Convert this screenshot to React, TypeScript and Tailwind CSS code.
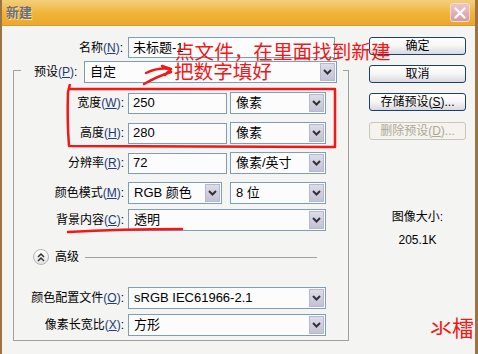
import React from "react";

const font = "font-['Liberation_Sans','Noto_Sans_CJK_SC',sans-serif]";

function Chevron() {
     return (
          <svg width="9" height="6" viewBox="0 0 9 6">
               <polyline points="1,1 4.5,4.5 8,1" fill="none" stroke="#333" strokeWidth="2" />
          </svg>
     );
}

function Label({ text, mn, w }: { text: string; mn: string; w: string }) {
     return (
          <div className={`${w} shrink-0 text-right text-[12px] text-black leading-none`}>
               {text}
               <span className="text-[#1c3a78]">
                    (<span className="underline">{mn}</span>)
               </span>
               :
          </div>
     );
}

function Input({ value, w }: { value: string; w: string }) {
     return (
          <div className={`${w} h-[21px] border border-[#7f9db9] bg-[#fcfcfc] pl-[4px] flex items-center text-[13px] text-black`}>
               {value}
          </div>
     );
}

function Select({ value, w }: { value: string; w: string }) {
     return (
          <div className={`${w} h-[22px] border border-[#7f9db9] bg-[#fcfcfc] flex items-center text-[13px] text-black`}>
               <span className="pl-[5px] flex-1 whitespace-nowrap overflow-hidden">{value}</span>
               <div className="w-[15px] h-[18px] mr-[1px] bg-gradient-to-b from-[#dcdcea] to-[#c2c2d6] border border-[#b8b8cc] flex items-center justify-center">
                    <Chevron />
               </div>
          </div>
     );
}

function Button({ children, disabled }: { children: React.ReactNode; disabled?: boolean }) {
     return (
          <div
               className={`w-[97px] h-[18px] rounded-[3px] border flex items-center justify-center text-[12px] ${
                    disabled
                         ? "border-[#c9c7ba] text-[#aca899] bg-[#f4f3ee]"
                         : "border-[#1c3f6e] text-black bg-gradient-to-b from-white via-[#f6f6f4] to-[#d8d8e2]"
               }`}
          >
               {children}
          </div>
     );
}

export default function App() {
     return (
          <div className={`relative w-[478px] h-[354px] overflow-hidden bg-[#f4f4f2] border-l-2 border-r-[3px] border-[#9a7442] ${font}`}>
               {/* Title bar */}
               <div className="h-[26px] bg-gradient-to-b from-[#f3cf7c] via-[#f1b53a] to-[#eaa82c] flex items-center justify-between px-[4px] border-b border-[#d89a2a]">
                    <span className="text-[13px] font-bold text-[#6e6e6e] [text-shadow:1px_1px_0_#f6e0b0]">新建</span>
                    <div className="w-[20px] h-[19px] rounded-[3px] bg-gradient-to-b from-[#f0c4c8] to-[#d89aa2] border border-[#f6dede] flex items-center justify-center mr-[1px]">
                         <svg width="12" height="12" viewBox="0 0 12 12">
                              <path d="M1.5 1.5 L10.5 10.5 M10.5 1.5 L1.5 10.5" stroke="white" strokeWidth="2.4" strokeLinecap="round" />
                         </svg>
                    </div>
               </div>

               {/* Body */}
               <div className="flex">
                    {/* Left */}
                    <div className="w-[355px] pt-[11px]">
                         <div className="flex items-center">
                              <Label text="名称" mn="N" w="w-[121px]" />
                              <div className="ml-[5px]">
                                   <Input value="未标题-1" w="w-[207px]" />
                              </div>
                         </div>

                         <div className="ml-[11px] mt-[12px] w-[336px] h-[271px] border border-[#a0a0a0]">
                              <div className="-mt-[10px] ml-[7px] w-[322px] h-[21px] bg-[#f4f4f2] flex items-center pl-[13px]">
                                   <div className="w-[50px] text-[12px] leading-none">
                                        预设
                                        <span className="text-[#1c3a78]">
                                             (<span className="underline">P</span>)
                                        </span>
                                        :
                                   </div>
                                   <Select value="自定" w="w-[253px]" />
                              </div>

                              <div className="mt-[10px] flex items-center h-[22px]">
                                   <Label text="宽度" mn="W" w="w-[110px]" />
                                   <div className="ml-[4px] flex items-center gap-[3px]">
                                        <Input value="250" w="w-[99px]" />
                                        <Select value="像素" w="w-[96px]" />
                                   </div>
                              </div>
                              <div className="mt-[8px] flex items-center h-[22px]">
                                   <Label text="高度" mn="H" w="w-[110px]" />
                                   <div className="ml-[4px] flex items-center gap-[3px]">
                                        <Input value="280" w="w-[99px]" />
                                        <Select value="像素" w="w-[96px]" />
                                   </div>
                              </div>
                              <div className="mt-[8px] flex items-center h-[22px]">
                                   <Label text="分辨率" mn="R" w="w-[110px]" />
                                   <div className="ml-[4px] flex items-center gap-[3px]">
                                        <Input value="72" w="w-[99px]" />
                                        <Select value="像素/英寸" w="w-[96px]" />
                                   </div>
                              </div>
                              <div className="mt-[8px] flex items-center h-[22px]">
                                   <Label text="颜色模式" mn="M" w="w-[110px]" />
                                   <div className="ml-[4px] flex items-center gap-[8px]">
                                        <Select value="RGB 颜色" w="w-[94px]" />
                                        <Select value="8 位" w="w-[96px]" />
                                   </div>
                              </div>
                              <div className="mt-[5px] flex items-center h-[22px]">
                                   <Label text="背景内容" mn="C" w="w-[110px]" />
                                   <div className="ml-[4px]">
                                        <Select value="透明" w="w-[198px]" />
                                   </div>
                              </div>

                              <div className="mt-[18px] flex items-center h-[16px] pl-[19px]">
                                   <div className="w-[16px] h-[16px] rounded-full border border-[#b4b4b4] bg-gradient-to-b from-white to-[#e2e2e2] flex items-center justify-center">
                                        <svg width="8" height="9" viewBox="0 0 8 9">
                                             <polyline points="1,4 4,1 7,4" fill="none" stroke="#333" strokeWidth="1.5" />
                                             <polyline points="1,8 4,5 7,8" fill="none" stroke="#333" strokeWidth="1.5" />
                                        </svg>
                                   </div>
                                   <span className="ml-[6px] text-[12px]">高级</span>
                                   <div className="ml-[6px] w-[232px] h-px bg-[#a0a0a0]" />
                              </div>

                              <div className="mt-[22px] flex items-center h-[22px]">
                                   <Label text="颜色配置文件" mn="O" w="w-[110px]" />
                                   <div className="ml-[4px]">
                                        <Select value="sRGB IEC61966-2.1" w="w-[198px]" />
                                   </div>
                              </div>
                              <div className="mt-[5px] flex items-center h-[22px]">
                                   <Label text="像素长宽比" mn="X" w="w-[110px]" />
                                   <div className="ml-[4px]">
                                        <Select value="方形" w="w-[198px]" />
                                   </div>
                              </div>
                         </div>
                    </div>

                    {/* Right */}
                    <div className="ml-[12px] w-[97px] pt-[11px] flex flex-col">
                         <Button>确定</Button>
                         <div className="mt-[10px]">
                              <Button>取消</Button>
                         </div>
                         <div className="mt-[10px]">
                              <Button>
                                   存储预设(<span className="underline">S</span>)...
                              </Button>
                         </div>
                         <div className="mt-[11px]">
                              <Button disabled>
                                   删除预设(<span className="underline">D</span>)...
                              </Button>
                         </div>
                         <div className="mt-[70px] text-center text-[12px] leading-[14px]">图像大小:</div>
                         <div className="mt-[9px] text-center text-[12px] leading-[14px]">205.1K</div>
                    </div>
               </div>

               {/* Red annotations */}
               <svg className="absolute left-[-2px] top-0 pointer-events-none" width="478" height="354" viewBox="0 0 478 354">
                    <path
                         d="M70 84 L68 92 Q67 120 69 146 L335 147 L335 89 L69 89"
                         fill="none"
                         stroke="#f01818"
                         strokeWidth="2.5"
                         strokeLinejoin="round"
                    />
                    <path d="M68 232 Q120 229 182 229" fill="none" stroke="#f01818" strokeWidth="2.5" strokeLinecap="round" />
                    <path d="M146 73 Q158 67 171 69 M144 84 Q156 77 171 72 M162 66 L171 69 L165 75" fill="none" stroke="#f01818" strokeWidth="2.5" strokeLinecap="round" strokeLinejoin="round" />
               </svg>
               <div className="absolute left-[173px] top-[40px] text-[19.6px] leading-[22px] text-[#f01818] font-['Noto_Sans_CJK_SC',sans-serif] whitespace-nowrap">
                    点文件，在里面找到新建
               </div>
               <div className="absolute left-[172px] top-[60px] text-[19.6px] leading-[22px] text-[#f01818] font-['Noto_Sans_CJK_SC',sans-serif] whitespace-nowrap">
                    把数字填好
               </div>
               <div className="absolute left-[428px] top-[314px] text-[22px] leading-[24px] text-[#f01818] font-['Noto_Sans_CJK_SC',sans-serif] whitespace-nowrap">
                    氺檑木
               </div>
          </div>
     );
}
